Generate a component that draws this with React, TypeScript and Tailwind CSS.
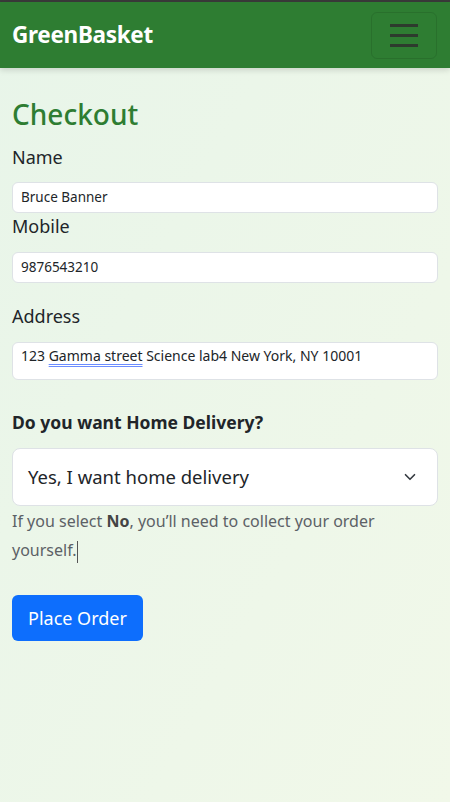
import { ChevronDown } from 'lucide-react';

export default function App() {
  return (
    <div
      className="min-h-[802px] w-full bg-gradient-to-br from-[#e8f5e9] to-[#f1f8e9] text-[#212529]"
      style={{ fontFamily: '"Noto Sans", sans-serif' }}
    >
      <div className="h-[2px] bg-[#3a3a3a]" />
      {/* Navbar */}
      <nav className="h-[66px] bg-[#2e7d32] flex items-center justify-between pl-3 pr-[13px] shadow-[0_2px_6px_rgba(0,0,0,0.15)]">
        <span className="text-[22.5px] font-bold text-white tracking-[-0.3px]">GreenBasket</span>
        <button className="w-[66px] h-[47px] rounded-[6px] border border-[rgba(0,0,0,0.1)] flex flex-col items-center justify-center gap-[7px]">
          <span className="block w-[28px] h-[3px] bg-[#2d3b2d]" />
          <span className="block w-[28px] h-[3px] bg-[#2d3b2d]" />
          <span className="block w-[28px] h-[3px] bg-[#2d3b2d]" />
        </button>
      </nav>

      <div className="px-3 pt-[28px]">
        <h1 className="text-[28px] font-medium text-[#2e7d32] leading-[36px]">Checkout</h1>

        <div className="mt-[13px]">
          <label className="block text-[18px] leading-[24px]">Name</label>
          <div className="mt-[13px] h-[31px] rounded-[6px] bg-white border border-[#dee2e6] flex items-center px-2 text-[13.5px]">
            Bruce Banner
          </div>
        </div>

        <div className="mt-[1px]">
          <label className="block text-[18px] leading-[24px]">Mobile</label>
          <div className="mt-[14px] h-[31px] rounded-[6px] bg-white border border-[#dee2e6] flex items-center px-2 text-[13.5px]">
            9876543210
          </div>
        </div>

        <div className="mt-[21px]">
          <label className="block text-[18px] leading-[24px]">Address</label>
          <div className="mt-[14px] h-[38px] rounded-[6px] bg-white border border-[#dee2e6] px-2 pt-[2px] text-[14px] leading-[21px]">
            123{' '}
            <span className="underline decoration-double decoration-[#6b8cff] underline-offset-[3px]">Gamma street</span>{' '}
            Science lab4 New York, NY 10001
          </div>
        </div>

        <div className="mt-[30px]">
          <label className="block text-[17.5px] font-bold leading-[24px]">Do you want Home Delivery?</label>
          <div className="mt-[14px] h-[58px] rounded-[8px] bg-white border border-[#dee2e6] flex items-center justify-between pl-[15px] pr-[18px] text-[18.5px]">
            <span>Yes, I want home delivery</span>
            <ChevronDown size={18} strokeWidth={2.2} className="text-[#343a40]" />
          </div>
          <p className="mt-[1px] text-[16px] leading-[29px] text-[#5c6166]">
            If you select <b className="text-[#444]">No</b>, you’ll need to collect your order yourself.
            <span className="inline-block w-[1px] h-[22px] bg-[#555] align-middle" />
          </p>
        </div>

        <button className="mt-[30px] h-[46px] px-[16px] rounded-[6px] bg-[#0d6efd] text-white text-[18px]">
          Place Order
        </button>
      </div>
    </div>
  );
}
